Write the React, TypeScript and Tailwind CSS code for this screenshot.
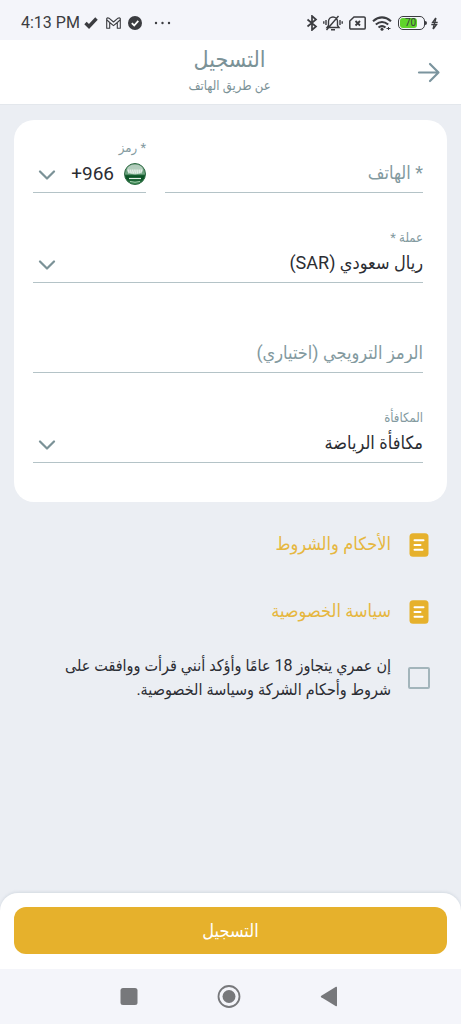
import React from "react";
import clsx from "clsx";

const currencies = ["ريال سعودي (SAR)"];
const bonuses = ["مكافأة الرياضة"];
const dialCodes = ["+966"];

const App = () => {
  const [phone, setPhone] = React.useState("");
  const [promo, setPromo] = React.useState("");
  const [accepted, setAccepted] = React.useState(false);

  return (
    <div
      dir="rtl"
      className="flex min-h-screen flex-col bg-[#ebeef3] font-['Roboto','DejaVu_Sans_Condensed','DejaVu_Sans',sans-serif] text-[#2b2d33]"
    >
      <StatusBar />
      <Header />
      <main className="flex-1">
        <form
          id="register"
          className="mx-[14px] mt-[15px] flex flex-col gap-[37px] rounded-[20px] bg-white pt-5 pr-6 pb-[39px] pl-[19px]"
          onSubmit={(e) => e.preventDefault()}
        >
          <div className="flex gap-[19px]">
            <Field className="flex-1">
              <input
                type="tel"
                dir="rtl"
                aria-label="الهاتف"
                placeholder="* الهاتف"
                value={phone}
                onChange={(e) => setPhone(e.target.value)}
                className="w-full min-w-0 pb-[2px] text-lg outline-none placeholder:text-[#839a9f]"
              />
            </Field>
            <Field id="code" label="* رمز" className="w-[113px]">
              <SaudiFlag />
              <SelectBox id="code" options={dialCodes} ltr />
            </Field>
          </div>
          <Field id="currency" label="عملة *">
            <SelectBox id="currency" options={currencies} />
          </Field>
          <Field>
            <input
              type="text"
              aria-label="الرمز الترويجي"
              placeholder="الرمز الترويجي (اختياري)"
              value={promo}
              onChange={(e) => setPromo(e.target.value)}
              className="w-full min-w-0 pb-[2px] text-lg outline-none placeholder:text-[#839a9f]"
            />
          </Field>
          <Field id="bonus" label="المكافأة">
            <SelectBox id="bonus" options={bonuses} />
          </Field>
        </form>

        <div className="pt-[31px] pr-[31px] pb-6 pl-12">
          <DocLink>الأحكام والشروط</DocLink>
          <DocLink>سياسة الخصوصية</DocLink>
          <div className="-mt-[13px] flex items-center gap-[17px]">
            <input
              id="terms"
              type="checkbox"
              form="register"
              checked={accepted}
              onChange={(e) => setAccepted(e.target.checked)}
              className="size-[22px] shrink-0 appearance-none rounded-[2px] border-2 border-[#a3b5bb] checked:bg-[#e6b12c]"
            />
            <label htmlFor="terms" className="text-base leading-6">
              إن عمري يتجاوز 18 عامًا وأؤكد أنني قرأت ووافقت على شروط وأحكام
              الشركة وسياسة الخصوصية.
            </label>
          </div>
        </div>
      </main>

      <footer className="rounded-t-[18px] bg-white px-[14px] pt-[14px] pb-[15px] shadow-[0_-1px_3px_rgba(120,140,160,0.2)]">
        <button
          type="submit"
          form="register"
          className="h-[47px] w-full rounded-xl bg-[#e6b12c] text-lg text-white"
        >
          التسجيل
        </button>
      </footer>
      <SystemNav />
    </div>
  );
};

const Field = ({
  id,
  label,
  className,
  children
}: {
  id?: string;
  label?: string;
  className?: string;
  children: React.ReactNode;
}) => {
  return (
    <div className={clsx("flex flex-col", className)}>
      <div className="h-4 text-[13px] leading-4 text-[#839a9f]">
        {label && <label htmlFor={id}>{label}</label>}
      </div>
      <div className="flex h-[37px] items-center border-b border-[#b4c3c7]">
        {children}
      </div>
    </div>
  );
};

const SelectBox = ({
  id,
  options,
  ltr
}: {
  id: string;
  options: string[];
  ltr?: boolean;
}) => {
  return (
    <>
      <select
        id={id}
        dir={ltr ? "ltr" : "rtl"}
        className={clsx(
          "h-full min-w-0 flex-1 appearance-none bg-transparent outline-none",
          ltr ? "pr-[10px] text-right text-[19px]" : "pb-[2px] text-lg"
        )}
      >
        {options.map((item) => (
          <option key={item}>{item}</option>
        ))}
      </select>
      <svg
        viewBox="0 0 18 12"
        className="pointer-events-none ml-[5px] h-3 w-[18px] shrink-0"
        fill="none"
        stroke="#7b9297"
        strokeWidth="2.2"
        strokeLinecap="round"
        strokeLinejoin="round"
      >
        <path d="M2 3.500 9 10.500l7-7" />
      </svg>
    </>
  );
};

const DocLink = ({ children }: { children: React.ReactNode }) => {
  return (
    <a
      href="#docs"
      className="mb-[43px] flex h-6 items-center gap-[17px] text-lg text-[#e6b73f]"
    >
      <svg viewBox="0 0 22 24" className="h-6 w-[22px] shrink-0">
        <rect x="1.5" y="0.3" width="19" height="23.4" rx="3.5" fill="#e6b12c" />
        <path
          d="M6.500 7.300h9M6.500 12h6M6.500 16.700h8"
          stroke="#fff"
          strokeWidth="2"
          strokeLinecap="round"
        />
      </svg>
      <span className="pb-[2px]">{children}</span>
    </a>
  );
};

const Header = () => {
  return (
    <header className="grid h-[65px] grid-cols-[40px_1fr_40px] items-center border-b border-[#e3e7ec] bg-white px-[14px]">
      <button type="button" aria-label="رجوع" className="flex pr-[6px]">
        <svg
          viewBox="0 0 24 24"
          className="size-6"
          fill="none"
          stroke="#7b949e"
          strokeWidth="2.2"
          strokeLinecap="round"
          strokeLinejoin="round"
        >
          <path d="M2 12.500h19.500M13 4l8.500 8.500-8.500 8.500" />
        </svg>
      </button>
      <div className="pr-[2px] text-center text-[#7b9297]">
        <h1 className="text-[23px] leading-7">التسجيل</h1>
        <p className="text-[13px] leading-6">عن طريق الهاتف</p>
      </div>
    </header>
  );
};

const SaudiFlag = () => {
  return (
    <svg viewBox="0 0 22 22" className="size-[22px] shrink-0">
      <defs>
        <linearGradient id="flag" x1="0" y1="0" x2="0" y2="1">
          <stop offset="0" stopColor="#5f9472" />
          <stop offset="0.5" stopColor="#6fa581" />
          <stop offset="0.58" stopColor="#0c5527" />
          <stop offset="0.75" stopColor="#0c5527" />
          <stop offset="1" stopColor="#4c9a63" />
        </linearGradient>
      </defs>
      <circle cx="11" cy="11" r="10.5" fill="url(#flag)" stroke="#2f6b44" />
      <ellipse cx="11" cy="6.5" rx="8" ry="5" fill="#fff" opacity="0.5" />
      <path
        d="M3.500 7.500h15M4 9.500h14"
        stroke="#fff"
        strokeWidth="2"
        strokeDasharray="1.6 0.6"
        opacity="0.6"
      />
      <path d="M5 15.500h12" stroke="#e4efe7" strokeWidth="1.2" />
      <path d="M6 18.500q5 1.500 10 0" stroke="#a9d3b3" fill="none" />
    </svg>
  );
};

const StatusBar = () => {
  return (
    <div
      dir="ltr"
      className="flex h-10 items-center justify-between bg-[#f4f5fa] pt-[6px] pr-[23px] pl-[21px] text-[#3b3c40]"
    >
      <div className="flex items-center">
        <span className="mr-1 text-base">4:13 PM</span>
        <svg viewBox="0 0 14 14" className="mr-2 size-[14px]">
          <path
            d="M1.500 7 5 10.500 12.500 2.500"
            fill="none"
            stroke="currentColor"
            strokeWidth="3.4"
          />
        </svg>
        <svg
          viewBox="0 0 15 12"
          className="mr-[7px] h-3 w-[15px]"
          fill="none"
          stroke="currentColor"
          strokeWidth="1.1"
          strokeLinejoin="round"
        >
          <path d="M.7 11.300V1.500Q1.500.3 3 1.200L7.500 5 12 1.200q1.500-.9 2.300.3v9.800h-3V5.500L7.500 8.700 3.700 5.500v5.800z" />
          <path d="M3.700 5.500.9 3M11.300 5.500 14.100 3" />
        </svg>
        <svg viewBox="0 0 14 14" className="mr-3 size-[14px]">
          <circle cx="7" cy="7" r="7" fill="currentColor" />
          <path
            d="M3.800 7.200 6.200 9.500 10.300 4.800"
            fill="none"
            stroke="#fff"
            strokeWidth="1.8"
          />
        </svg>
        <svg viewBox="0 0 17 4" className="h-1 w-[17px]" fill="currentColor">
          <circle cx="2" cy="2" r="1.2" />
          <circle cx="8.5" cy="2" r="1.2" />
          <circle cx="15" cy="2" r="1.2" />
        </svg>
      </div>

      <div className="flex items-center">
        <svg
          viewBox="0 0 12 16"
          className="mr-[5px] h-4 w-3"
          fill="none"
          stroke="currentColor"
          strokeWidth="1.7"
        >
          <path d="M1.500 4.500 10 11.500 6 15V1l4 3.500-8.500 7" />
        </svg>
        <svg
          viewBox="0 0 20 16"
          className="mr-[6px] h-4 w-5"
          fill="none"
          stroke="currentColor"
          strokeWidth="1.4"
        >
          <path d="M4 12.500h12L14.500 10.500V6.500a4.500 4.500 0 0 0-9 0v4zM8 14.800h4M3.500 15 15.500 1" />
          <path d="M3 5v5M.8 6.200v2.600M17 5v5M19.200 6.200v2.600" />
        </svg>
        <svg
          viewBox="0 0 17 14"
          className="mr-[6px] h-[14px] w-[17px]"
          fill="none"
          stroke="currentColor"
          strokeWidth="1.5"
        >
          <path d="M5 .9h10a1.200 1.200 0 0 1 1.200 1.200v9.800a1.200 1.200 0 0 1-1.200 1.200H2a1.200 1.200 0 0 1-1.200-1.200V5z" />
          <path d="m6.500 5 4.500 4.500M11 5 6.500 9.500" strokeWidth="1.8" />
        </svg>
        <svg
          viewBox="0 0 20 15"
          className="mr-[6px] h-[15px] w-5"
          fill="none"
          stroke="currentColor"
          strokeWidth="2.1"
        >
          <path d="M1 5.200q9-7.500 18 0M3.800 8.500q6.200-5 12.400 0M6.500 11.500q3.500-2.800 7 0" />
          <circle cx="10" cy="13.2" r="1.5" fill="currentColor" stroke="none" />
          <path d="M14.500 12.500h4M16.500 11v3" strokeWidth="1" />
        </svg>
        <div className="flex h-[14px] w-[27px] rounded-[5px] border border-[#3b3c40] p-px">
          <div className="flex w-[17px] items-center justify-center rounded-[3px] bg-[#5fd42a] pl-1 text-[10px] leading-none">
            70
          </div>
        </div>
        <div className="mr-1 h-1 w-[2px] rounded-r-full bg-[#3b3c40]" />
        <svg
          viewBox="0 0 7 13"
          className="h-[13px] w-[7px]"
          fill="none"
          stroke="currentColor"
          strokeWidth="1.3"
        >
          <path d="M4.800.8 1.500 5.500h5.200M.3 7.700h5.200L2.200 12.200M5 1 2 12" />
        </svg>
      </div>
    </div>
  );
};

const SystemNav = () => {
  return (
    <nav
      dir="ltr"
      className="flex h-[55px] items-center justify-center gap-[76px] bg-[#f4f5fa] pr-1 text-[#77787b]"
    >
      <button type="button" aria-label="Recents">
        <svg viewBox="0 0 24 24" className="size-6" fill="currentColor">
          <rect x="3.5" y="3" width="17" height="17" rx="2.5" />
        </svg>
      </button>
      <button type="button" aria-label="Home">
        <svg viewBox="0 0 24 24" className="size-6">
          <circle
            cx="12"
            cy="11.5"
            r="10.5"
            fill="none"
            stroke="currentColor"
            strokeWidth="1.8"
          />
          <circle cx="12" cy="11.5" r="6.5" fill="currentColor" />
        </svg>
      </button>
      <button type="button" aria-label="Back">
        <svg viewBox="0 0 24 24" className="size-6" fill="currentColor">
          <path d="M4.300 10.700 19 1.800q1-.4 1 .7v18q0 1.100-1 .7L4.300 12.300q-1.200-.8 0-1.600z" />
        </svg>
      </button>
    </nav>
  );
};

export default App;
